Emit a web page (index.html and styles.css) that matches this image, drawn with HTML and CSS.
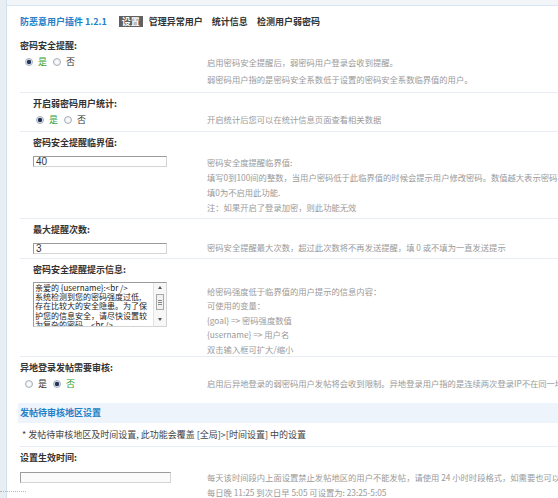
FILE: index.html
```html
<!DOCTYPE html>
<html lang="zh-CN">
<head>
<meta charset="utf-8">
<title>防恶意用户插件</title>
<link rel="stylesheet" href="styles.css">
</head>
<body>
<div class="page">
  <div class="side"></div>
  <div class="main">
    <div class="topbar"></div>
    <div class="content">
      <div class="header">
        <span class="title">防恶意用户插件 1.2.1</span>
        <span class="tab tab-active">设置</span>
        <span class="tab">管理异常用户</span>
        <span class="tab">统计信息</span>
        <span class="tab">检测用户弱密码</span>
      </div>

      <div class="item item-first">
        <div class="label">密码安全提醒:</div>
        <div class="body">
          <div class="ctrl radios">
            <span class="radio on"></span><span class="opt checked">是</span>
            <span class="radio"></span><span class="opt">否</span>
          </div>
          <div class="tips tips-tall">启用密码安全提醒后，弱密码用户登录会收到提醒。<br>弱密码用户指的是密码安全系数低于设置的密码安全系数临界值的用户。</div>
        </div>
      </div>

      <div class="item sub">
        <div class="label">开启弱密码用户统计:</div>
        <div class="body">
          <div class="ctrl radios">
            <span class="radio on"></span><span class="opt checked">是</span>
            <span class="radio"></span><span class="opt">否</span>
          </div>
          <div class="tips">开启统计后您可以在统计信息页面查看相关数据</div>
        </div>
      </div>

      <div class="item sub">
        <div class="label">密码安全提醒临界值:</div>
        <div class="body">
          <div class="ctrl"><input class="field" type="text" value="40"></div>
          <div class="tips tips-multi">密码安全度提醒临界值:<br>填写0到100间的整数，当用户密码低于此临界值的时候会提示用户修改密码。数值越大表示密码要求越高<br>填0为不启用此功能.<br>注：如果开启了登录加密，则此功能无效</div>
        </div>
      </div>

      <div class="item sub">
        <div class="label">最大提醒次数:</div>
        <div class="body">
          <div class="ctrl"><input class="field" type="text" value="3"></div>
          <div class="tips tips-field">密码安全提醒最大次数，超过此次数将不再发送提醒，填 0 或不填为一直发送提示</div>
        </div>
      </div>

      <div class="item sub item-area">
        <div class="label">密码安全提醒提示信息:</div>
        <div class="body">
          <div class="ctrl">
            <div class="area">
              <div class="area-text">亲爱的 {username}:&lt;br /&gt;<br>系统检测到您的密码强度过低,<br>存在比较大的安全隐患。为了保<br>护您的信息安全，请尽快设置较<br>为复杂的密码。&lt;br /&gt;</div>
              <div class="scroll">
                <span class="arrow up"></span>
                <span class="thumb"><i></i><i></i><i></i></span>
                <span class="arrow down"></span>
              </div>
            </div>
          </div>
          <div class="tips tips-area">给密码强度低于临界值的用户提示的信息内容：<br>可使用的变量：<br>{goal} =&gt; 密码强度数值<br>{username} =&gt; 用户名<br>双击输入框可扩大/缩小</div>
        </div>
      </div>

      <div class="item item-last">
        <div class="label">异地登录发帖需要审核:</div>
        <div class="body">
          <div class="ctrl radios">
            <span class="radio"></span><span class="opt">是</span>
            <span class="radio on"></span><span class="opt checked">否</span>
          </div>
          <div class="tips">启用后异地登录的弱密码用户发帖将会收到限制。异地登录用户指的是连续两次登录IP不在同一地区的用户。</div>
        </div>
      </div>

      <div class="section">发帖待审核地区设置</div>

      <div class="note">* 发帖待审核地区及时间设置, 此功能会覆盖 [全局]&gt;[时间设置] 中的设置</div>

      <div class="item item-time">
        <div class="label">设置生效时间:</div>
        <div class="body">
          <div class="ctrl"><input class="field field-wide" type="text" value=""></div>
          <div class="tips tips-multi">每天该时间段内上面设置禁止发帖地区的用户不能发帖，请使用 24 小时时段格式，如需要也可以设置多个时段<br>每日晚 11:25 到次日早 5:05 可设置为: 23:25-5:05</div>
        </div>
      </div>
    </div>
  </div>
  <div class="corner"></div>
</div>
</body>
</html>
```

FILE: styles.css
```css
* { box-sizing: border-box; }
html, body { margin: 0; padding: 0; }
body {
  width: 558px;
  height: 498px;
  overflow: hidden;
  background: #fff;
  font-family: "Noto Sans CJK SC", "Liberation Sans", sans-serif;
  color: #333;
}
.page { display: flex; height: 498px; position: relative; }
.side {
  width: 7px;
  flex: none;
  background: #e7eef4;
  border-right: 1px solid #d3dfe9;
}
.main { flex: 1; min-width: 0; overflow: hidden; }
.topbar {
  height: 6px;
  background: #f3f6f9;
  border-bottom: 1px solid #d8e5f0;
}
.content { padding-left: 13px; }

.header {
  height: 30px;
  display: flex;
  align-items: center;
  font-size: 9px;
  font-weight: bold;
  white-space: nowrap;
}
.title { color: #2180c8; margin-right: 12px; }
.tab { color: #333; margin-right: 9px; }
.tab-active {
  background: #606060;
  color: #fff;
  line-height: 11px;
  padding: 0 3px;
  margin-right: 6px;
}

.item {
  border-bottom: 1px solid #e7edf2;
  padding: 3px 0 3px 0;
}
.item.sub { padding-left: 13px; }
.item-first { padding-top: 2px; padding-bottom: 4px; }
.item-area { padding-bottom: 0; }
.item-last { border-bottom: 0; padding-bottom: 11px; }
.item-time { border-bottom: 0; }

.label {
  font-size: 9px;
  font-weight: bold;
  line-height: 16px;
  color: #333;
  white-space: nowrap;
}
.body { display: flex; }
.ctrl { width: 187px; flex: none; font-size: 9px; line-height: 16px; white-space: nowrap; }
.sub .ctrl { width: 174px; }
.radios { display: flex; align-items: center; height: 16px; }

.tips {
  font-size: 8.3px;
  line-height: 15px;
  color: #9a9a9a;
  white-space: nowrap;
}
.tips-tall { line-height: 17px; }
.tips-multi { padding-top: 4px; }
.tips-field { padding-top: 2px; }
.tips-area { padding-top: 6px; line-height: 14.4px; }

.radio {
  flex: none;
  width: 8px;
  height: 8px;
  border-radius: 50%;
  border: 1px solid #a7b0ba;
  background: radial-gradient(circle, #ffffff 0, #e3e6ea 100%);
  margin-left: 6px;
}
.radios .radio:first-child { margin-left: 5px; }
.sub .radios .radio:first-child { margin-left: 3px; }
.radio.on { background: radial-gradient(circle, #24345c 0, #24345c 1.8px, #dfe5ec 2.6px); }
.opt {
  font-size: 9px;
  margin-left: 5px;
  color: #333;
}
.opt.checked { color: #2f9d2f; }

.field {
  display: block;
  margin: 5px 0 0 0;
  width: 134px;
  height: 11px;
  padding: 0 2px;
  border: 1px solid;
  border-color: #9c9c9c #d4d4d4 #d4d4d4 #9c9c9c;
  font-family: "Liberation Sans", sans-serif;
  font-size: 10px;
  line-height: 9px;
  color: #333;
  background: #fff;
  outline: none;
}
.field-wide { width: 151px; margin-top: 6px; background: #fbfbfb; }

.area {
  display: flex;
  margin-top: 4px;
  width: 134px;
  height: 45px;
  border: 1px solid;
  border-color: #9c9c9c #d4d4d4 #d4d4d4 #9c9c9c;
  background: #fff;
  overflow: hidden;
}
.area-text {
  flex: 1;
  min-width: 0;
  overflow: hidden;
  font-size: 8px;
  line-height: 9.2px;
  padding: 0 0 0 1px;
  color: #222;
  white-space: nowrap;
}
.scroll {
  width: 13px;
  flex: none;
  border-left: 1px solid #e2e2e2;
  background: #f7f7f7;
  display: flex;
  flex-direction: column;
  align-items: center;
  padding-top: 3px;
}
.arrow { width: 0; height: 0; border-left: 2.5px solid transparent; border-right: 2.5px solid transparent; }
.arrow.up { border-bottom: 3px solid #555; }
.arrow.down { border-top: 3px solid #555; margin-top: 8px; }
.thumb {
  margin-top: 5px;
  width: 8px;
  height: 16px;
  border: 1px solid #a8a8a8;
  background: #f1f1f1;
  display: flex;
  flex-direction: column;
  justify-content: center;
  align-items: center;
  gap: 1px;
}
.thumb i { display: block; width: 4px; height: 1px; background: #888; }

.section {
  margin-left: -2px;
  height: 20px;
  line-height: 20px;
  padding-left: 2px;
  background: #edf4fb;
  color: #2180c8;
  font-size: 9px;
  font-weight: bold;
  white-space: nowrap;
}
.note {
  padding: 4px 0 4px 2px;
  line-height: 15px;
  font-size: 9px;
  color: #444;
  border-bottom: 1px solid #e7edf2;
  white-space: nowrap;
}

.corner {
  position: absolute;
  left: 0;
  top: 491px;
  width: 26px;
  height: 1px;
  border-top: 1px dotted #b5b5b5;
}
```
